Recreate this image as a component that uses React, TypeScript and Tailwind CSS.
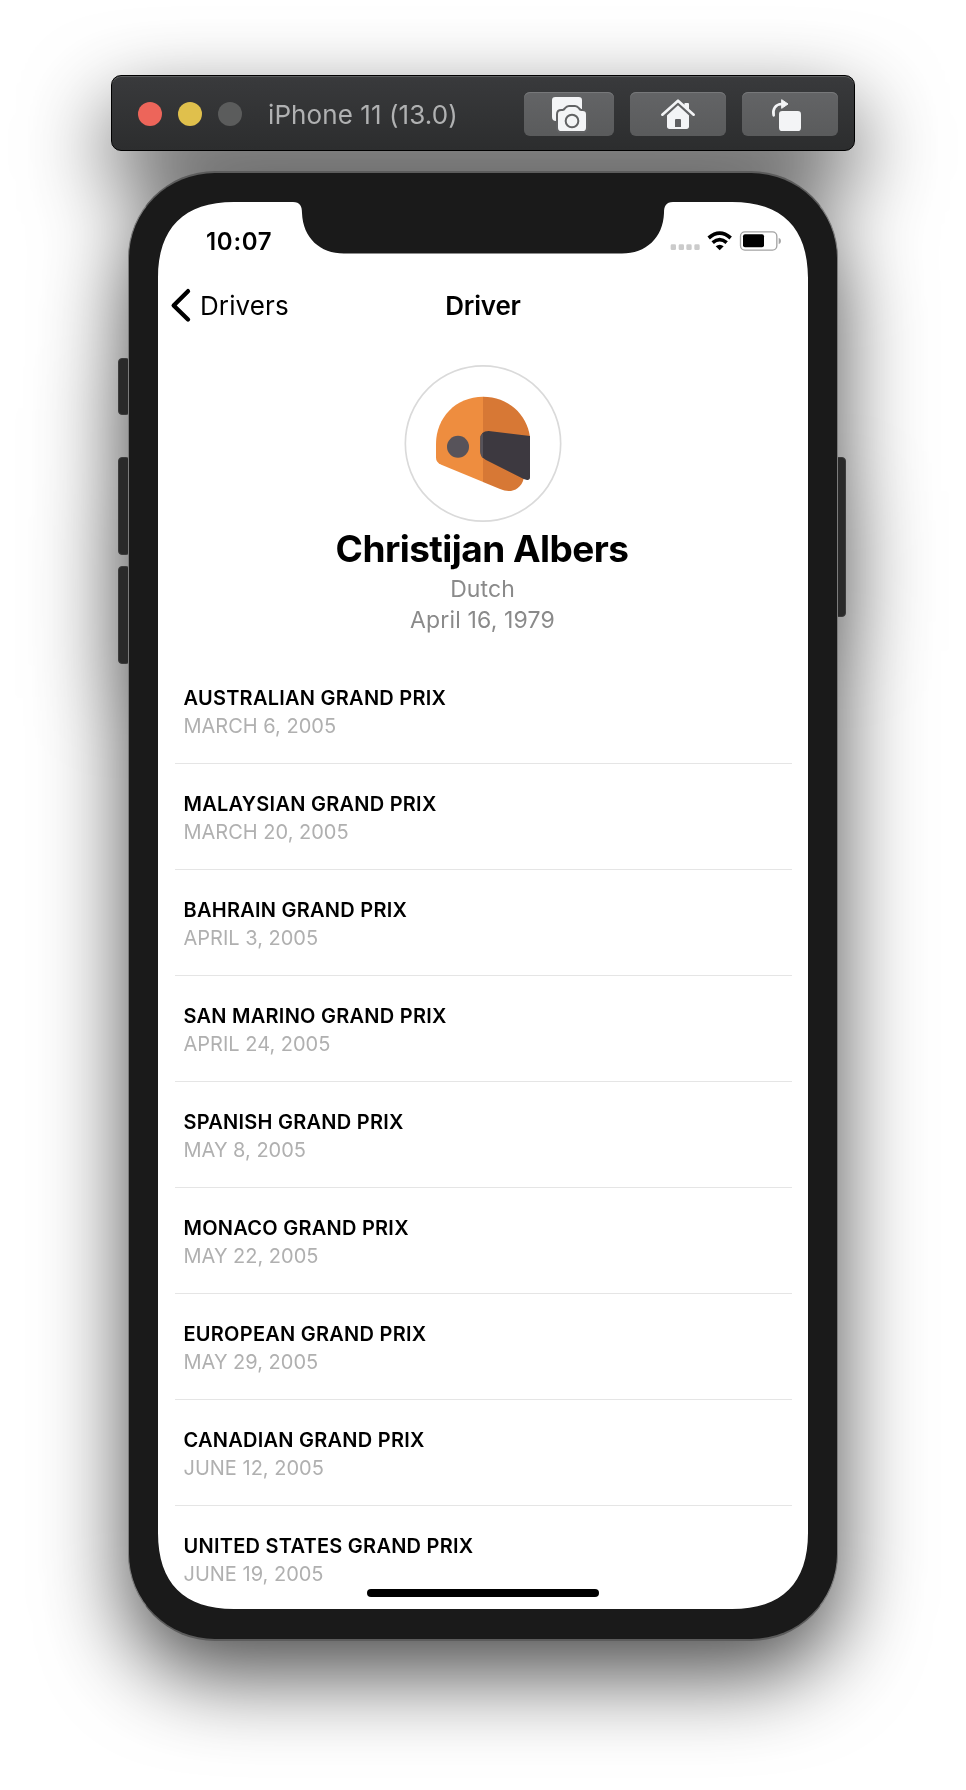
import React from "react";

const races = [
  { name: "AUSTRALIAN GRAND PRIX", date: "MARCH 6, 2005" },
  { name: "MALAYSIAN GRAND PRIX", date: "MARCH 20, 2005" },
  { name: "BAHRAIN GRAND PRIX", date: "APRIL 3, 2005" },
  { name: "SAN MARINO GRAND PRIX", date: "APRIL 24, 2005" },
  { name: "SPANISH GRAND PRIX", date: "MAY 8, 2005" },
  { name: "MONACO GRAND PRIX", date: "MAY 22, 2005" },
  { name: "EUROPEAN GRAND PRIX", date: "MAY 29, 2005" },
  { name: "CANADIAN GRAND PRIX", date: "JUNE 12, 2005" },
  { name: "UNITED STATES GRAND PRIX", date: "JUNE 19, 2005" },
];

const buttonClass =
  "h-11 rounded-[6px] bg-linear-to-b from-[#636466] to-[#5a5b5c] shadow-[inset_0_1px_0_#77787a]";

const sideButtonClass =
  "absolute w-[12px] rounded-[4px] border border-[#3c3c3c] bg-[#2a2a2a]";

function Toolbar() {
  return (
    <header className="flex h-[76px] w-[744px] items-center rounded-[10px] border border-black bg-linear-to-b from-[#393a3c] to-[#2c2d2e] pt-[2px] pr-4 pl-[26px] shadow-[inset_0_1px_0_#5c5e5f]">
      <div className="flex gap-4">
        <span className="size-6 rounded-full bg-[#ed655a]" />
        <span className="size-6 rounded-full bg-[#e0c04c]" />
        <span className="size-6 rounded-full bg-[#5b5c5c]" />
      </div>
      <h1 className="ml-[26px] flex-1 pt-px text-[26px] leading-8 tracking-[0.08px] whitespace-nowrap text-[#b0b1b2]">
        iPhone 11 (13.0)
      </h1>
      <div className="flex gap-4">
        <button aria-label="Screenshot" className={`${buttonClass} w-[90px]`}>
          <svg viewBox="132 96 270 132" className="h-11 w-[90px]">
            <path d="M226 111H296Q306 111 306 121V160H240V183H228Q216 183 216 171V121Q216 111 226 111Z" fill="#f3f4f6" />
            <path
              d="M244 153H248C257 153 257 141 267 141H285C295 141 295 153 304 153H308Q318 153 318 163V203Q318 213 308 213H244Q234 213 234 203V163Q234 153 244 153Z"
              fill="#f3f4f6"
              stroke="#616264"
              strokeWidth="12"
              paintOrder="stroke"
            />
            <circle cx="276" cy="183" r="19" fill="none" stroke="#616264" strokeWidth="6" />
          </svg>
        </button>
        <button aria-label="Home" className={`${buttonClass} w-24`}>
          <svg viewBox="450 96 288 132" className="h-11 w-24">
            <path d="M613 155V132Q613 129 616 129H624Q627 129 627 132V160Z" fill="#f3f4f6" />
            <path d="M594 133L627 163V199Q627 207 619 207H569Q561 207 561 199V163Z" fill="#f3f4f6" />
            <path d="M549 170L594 129L639 170" fill="none" stroke="#616264" strokeWidth="10" />
            <path d="M547 164L594 122L641 164" fill="none" stroke="#f3f4f6" strokeWidth="8" strokeLinecap="round" strokeLinejoin="round" />
            <path d="M585 201V180Q585 177 588 177H600Q603 177 603 180V201Z" fill="#5f6062" />
          </svg>
        </button>
        <button aria-label="Rotate" className={`${buttonClass} w-24`}>
          <svg viewBox="786 96 288 132" className="h-11 w-24">
            <rect x="897" y="153" width="66" height="60" rx="10" fill="#f3f4f6" />
            <path d="M881 166C877 147 886 133 905 132" fill="none" stroke="#f3f4f6" strokeWidth="8" strokeLinecap="round" />
            <path d="M905 119L924 132L905 145Z" fill="#f3f4f6" stroke="#f3f4f6" strokeWidth="3" strokeLinejoin="round" />
          </svg>
        </button>
      </div>
    </header>
  );
}

function StatusBar() {
  return (
    <div className="flex h-[78px] shrink-0 justify-between pt-[25px] pr-[25px] pl-[48px]">
      <span className="pt-px text-[24px] leading-7 font-semibold tracking-[0.7px]">10:07</span>
      <svg viewBox="564 510 345 66" className="mt-[3px] h-[22px] w-[115px]">
        <g fill="#cbcbcb">
          <rect x="572" y="553" width="16" height="17" rx="4" />
          <rect x="596" y="553" width="16" height="17" rx="4" />
          <rect x="619" y="553" width="16" height="17" rx="4" />
          <rect x="643" y="553" width="16" height="17" rx="4" />
        </g>
        <g fill="none" stroke="#000" strokeWidth="11">
          <path d="M686 534Q719 505 752 534" />
          <path d="M698 548Q719 530 740 548" />
        </g>
        <path d="M707 559Q719 550 731 559L719 571Z" fill="#000" />
        <rect x="781.5" y="515.5" width="109" height="55" rx="13" fill="none" stroke="#a3a3a3" strokeWidth="4" />
        <rect x="789" y="523" width="63" height="39" rx="6" fill="#000" />
        <path d="M896 533Q903 536 903 543Q903 550 896 553Z" fill="#a3a3a3" />
      </svg>
    </div>
  );
}

function Helmet() {
  return (
    <svg viewBox="912 285 474 471" className="h-[157px] w-[158px]">
      <circle cx="1149" cy="520.5" r="233" fill="#fff" stroke="#dadada" strokeWidth="5" />
      <path d="M1149.500 380C1066 380 1008 444 1008 522V563Q1008 577 1024 584L1149.500 636Z" fill="#ee8d3f" />
      <path d="M1149 380C1224 380 1281 432 1290 500L1271 626C1265 651 1245 663 1226 663Q1214 663 1200 657L1149 636Z" fill="#d77835" />
      <circle cx="1074" cy="530" r="33" fill="#57535a" />
      <path d="M1166 483L1290 498V622Q1290 631 1281 630L1271 627L1158 570Q1141 562 1141 543V507Q1141 483 1166 483Z" fill="#3d3940" />
      <path d="M1149 489V565Q1141 558 1141 543V507Q1141 495 1149 489Z" fill="#57535a" />
    </svg>
  );
}

function Screen() {
  return (
    <main className="relative flex h-[1407px] w-[650px] flex-col overflow-hidden bg-white text-black [clip-path:path('M76,0H135C142,0_144,4_144,11C145,36_162,51.5_186,51.5H464C488,51.5_505,36_506,11C506,4_508,0_515,0H574C624,0_650,26_650,76V1331C650,1381_624,1407_574,1407H76C26,1407_0,1381_0,1331V76C0,26_26,0_76,0Z')]">
      <StatusBar />
      <nav className="grid h-[50px] shrink-0 grid-cols-3 items-center text-[26px] leading-8">
        <button className="flex items-center pl-3">
          <svg viewBox="210 54 66 104" className="h-[35px] w-[22px]">
            <path d="M264 63L221 106L264 148" fill="none" stroke="#000" strokeWidth="13" strokeLinecap="round" strokeLinejoin="round" />
          </svg>
          <span className="ml-2 pt-[2px] tracking-[0.1px]">Drivers</span>
        </button>
        <h2 className="pt-[2px] text-center font-semibold tracking-[-0.2px]">Driver</h2>
      </nav>
      <section className="flex shrink-0 flex-col items-center pt-[35px]">
        <Helmet />
        <h3 className="mt-[4px] pr-[2px] text-[37px] leading-[46px] font-bold tracking-[-0.55px] whitespace-nowrap">
          Christijan Albers
        </h3>
        <p className="pt-px pr-px text-[23px] leading-8 tracking-[0.1px] text-[#8a8a8a]">Dutch</p>
        <p className="pr-px text-[23px] leading-[31px] tracking-[0.15px] text-[#8a8a8a]">April 16, 1979</p>
      </section>
      <ul className="mt-[22px] flex shrink-0 flex-col pr-4 pl-[17px]">
        {races.map((race) => (
          <li key={race.name} className="h-[106px] shrink-0 border-b border-[#e5e5e5] pt-[26px] pl-[8.500px]">
            <p className="text-[20px] leading-7 font-semibold tracking-[0.25px]">{race.name}</p>
            <p className="text-[20px] leading-[29px] text-[#b0b0b0]">{race.date}</p>
          </li>
        ))}
      </ul>
      <span className="absolute bottom-[12px] left-[209px] h-[8.500px] w-[232px] rounded-full bg-black" />
    </main>
  );
}

export default function App() {
  return (
    <div className="flex h-[1790px] w-[966px] flex-col items-center overflow-hidden bg-white pt-[75px] font-['Inter','Liberation_Sans',sans-serif]">
      <div className="flex flex-col items-center gap-5 [filter:drop-shadow(0_34px_43px_rgba(0,0,0,0.7))]">
        <Toolbar />
        <div className="relative">
          <span className={`${sideButtonClass} top-[187px] -left-[10px] h-[57px]`} />
          <span className={`${sideButtonClass} top-[286px] -left-[10px] h-[98px]`} />
          <span className={`${sideButtonClass} top-[395px] -left-[10px] h-[98px]`} />
          <span className={`${sideButtonClass} top-[286px] -right-[8px] h-[160px]`} />
          <div className="relative h-[1470px] w-[710px] rounded-[87px] border border-t-2 border-b-2 border-x-[#7c7c7c] border-y-[#5c5c5c] bg-[#1a1a1a] px-[29px] pt-[29px]">
            <Screen />
          </div>
        </div>
      </div>
    </div>
  );
}
